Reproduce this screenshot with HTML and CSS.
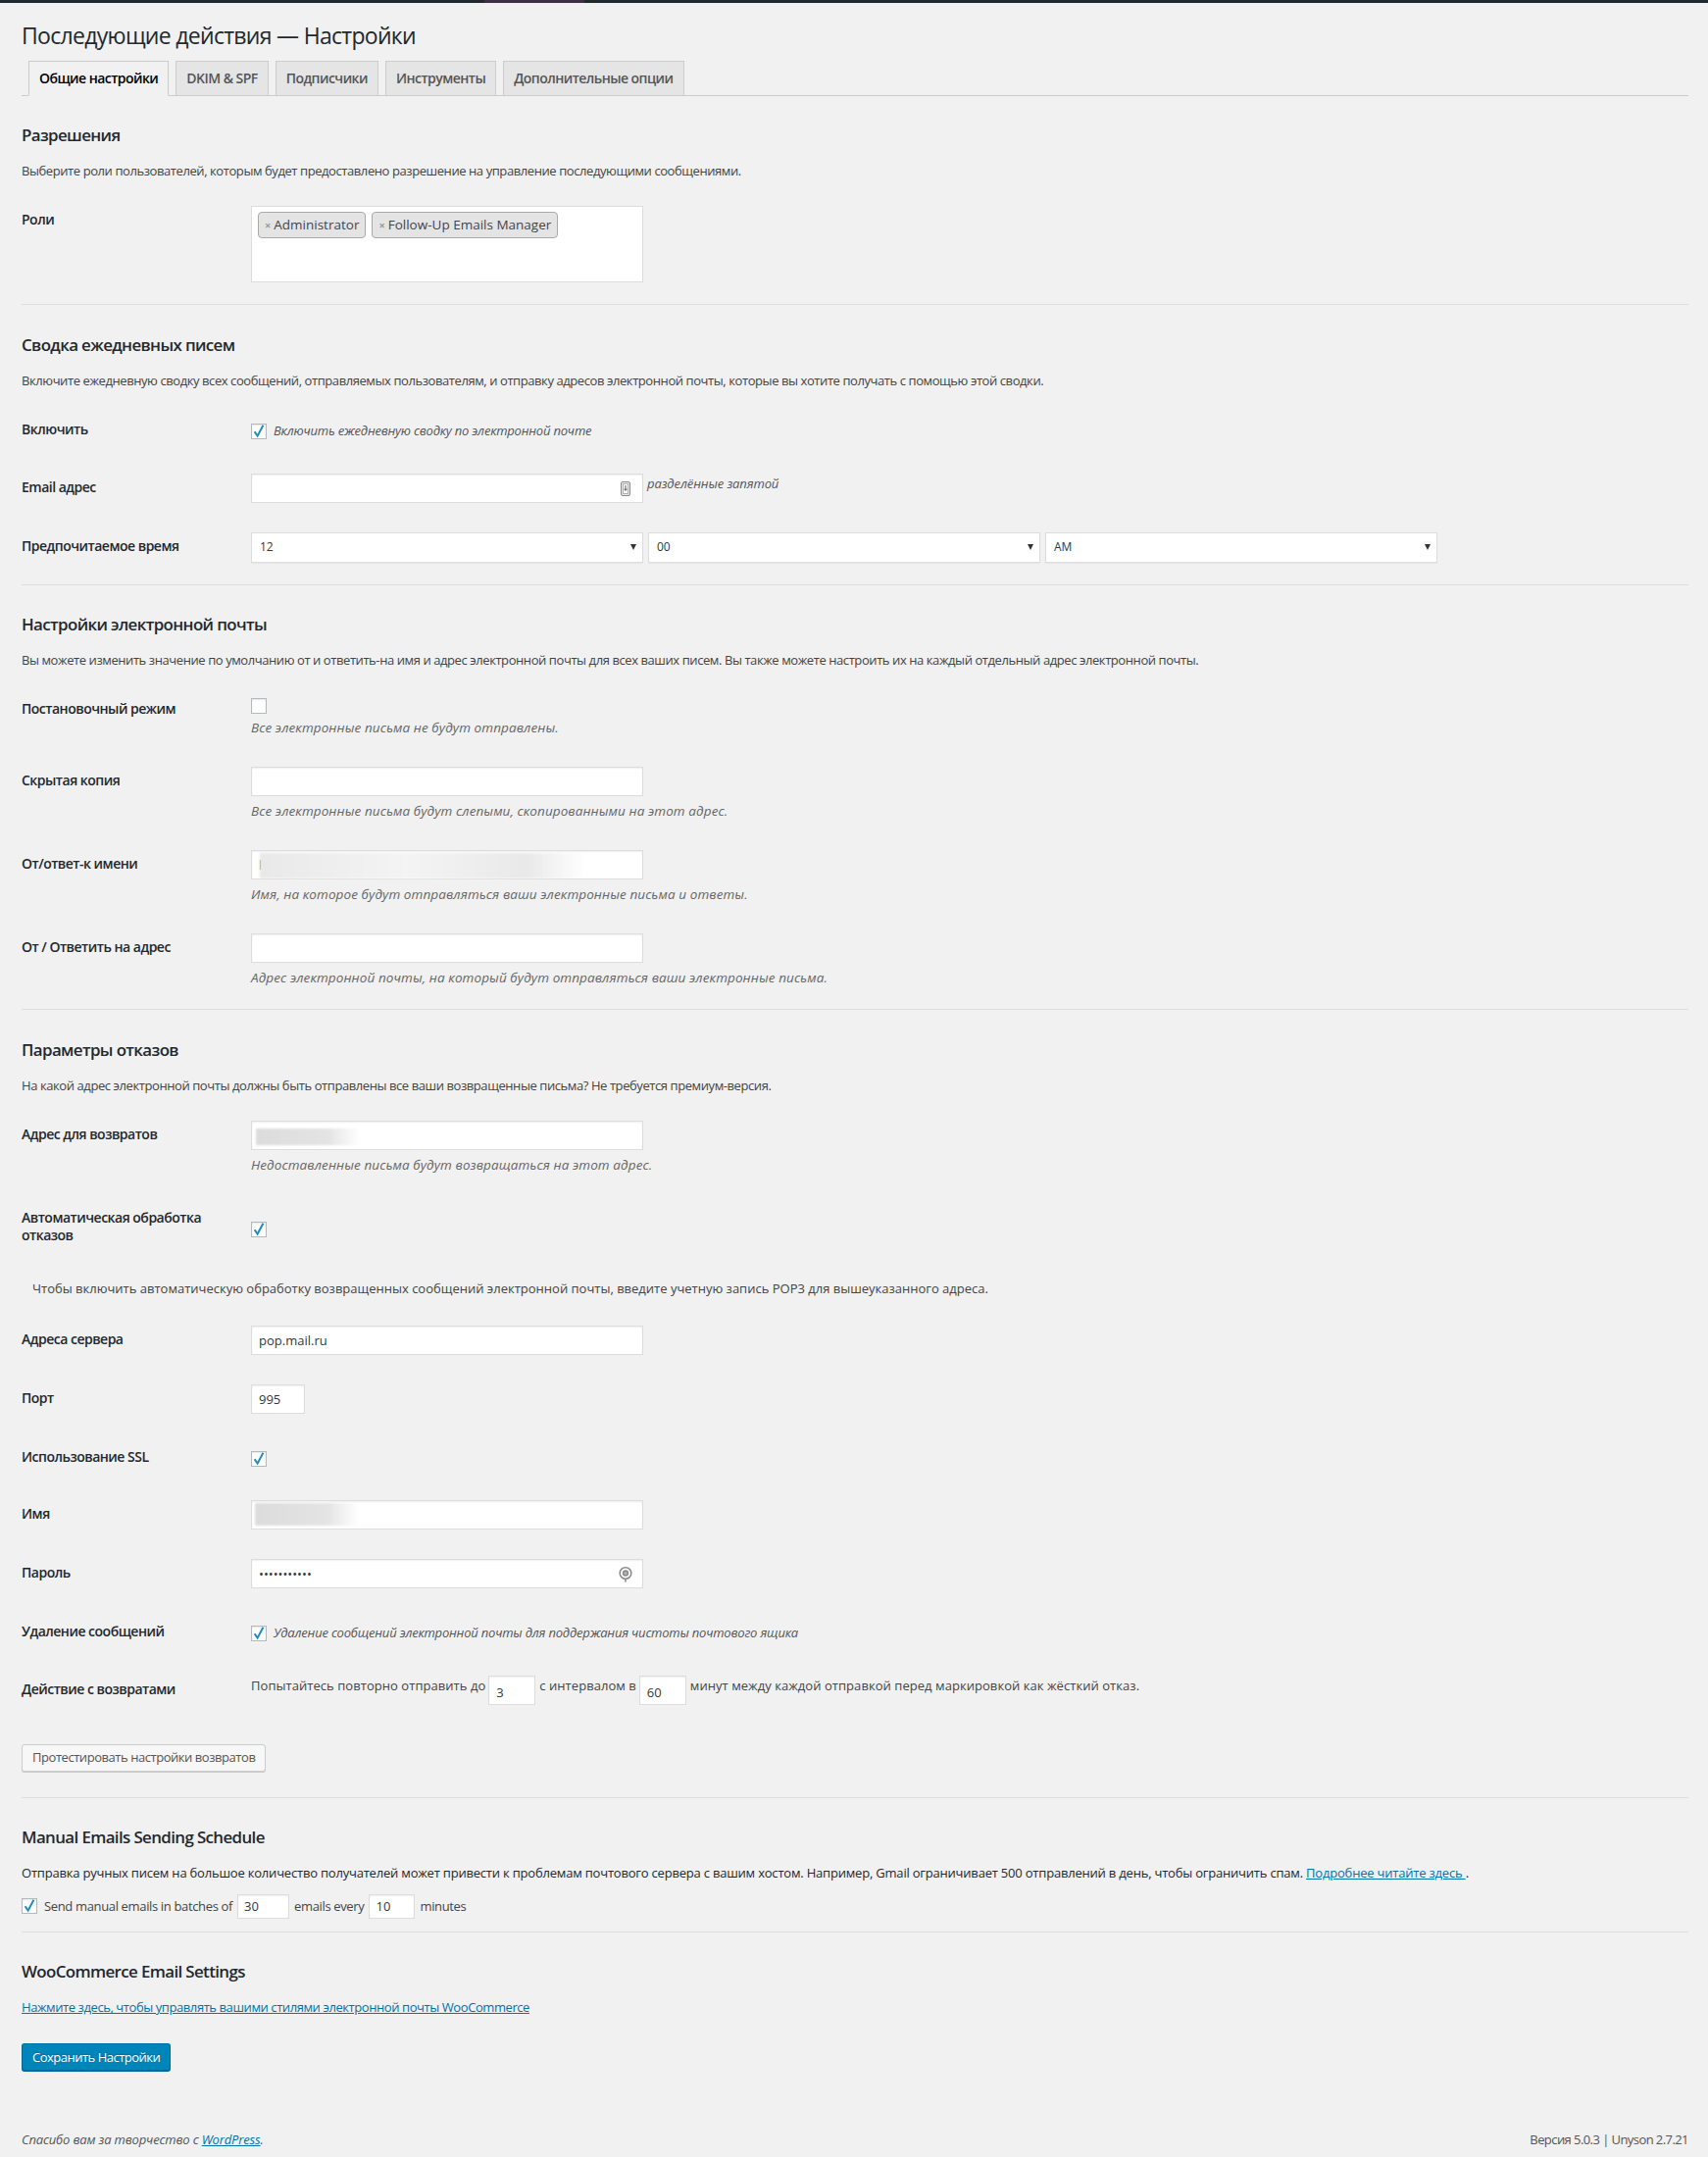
FILE: index.html
```html
<!DOCTYPE html>
<html lang="ru">

<head>
    <meta charset="utf-8">
    <title>Последующие действия — Настройки</title>
    <link rel="stylesheet" href="styles.css">
</head>

<body>
    <div class="adminbar"><span class="adminbar-hover"></span></div>

    <div class="wrap">
        <h1>Последующие действия — Настройки</h1>

        <nav class="tabs">
            <a class="tab active" href="#">Общие настройки</a>
            <a class="tab" href="#">DKIM &amp; SPF</a>
            <a class="tab" href="#">Подписчики</a>
            <a class="tab" href="#">Инструменты</a>
            <a class="tab" href="#">Дополнительные опции</a>
        </nav>

        <!-- разрешения -->
        <section class="section">
            <h2>Разрешения</h2>
            <p class="intro">Выберите роли пользователей, которым будет предоставлено разрешение на управление последующими сообщениями.</p>
            <div class="form">
                <div class="row">
                    <div class="th">Роли</div>
                    <div class="td">
                        <div class="roles">
                            <span class="chip"><span class="chip-x">×</span>Administrator</span>
                            <span class="chip"><span class="chip-x">×</span>Follow-Up Emails Manager</span>
                        </div>
                    </div>
                </div>
            </div>
        </section>

        <hr class="sep">

        <!-- сводка -->
        <section class="section">
            <h2>Сводка ежедневных писем</h2>
            <p class="intro">Включите ежедневную сводку всех сообщений, отправляемых пользователям, и отправку адресов электронной почты, которые вы хотите получать с помощью этой сводки.</p>
            <div class="form">
                <div class="row">
                    <div class="th">Включить</div>
                    <div class="td td-check">
                        <label class="check">
                            <span class="cb on"><svg viewBox="0 0 16 16"><path d="M3.6 8.2 L6.6 12.6 L12.4 1.8" /></svg></span>
                            <em>Включить ежедневную сводку по электронной почте</em>
                        </label>
                    </div>
                </div>
                <div class="row">
                    <div class="th">Email адрес</div>
                    <div class="td">
                        <div class="inline-top">
                            <div class="field">
                                <input class="text" type="text" value="">
                                <svg class="field-icon card" viewBox="0 0 10 15">
                                    <rect x="0.5" y="0.5" width="9" height="14" rx="1.5" />
                                    <rect x="2.5" y="2.5" width="5" height="10" class="inner" />
                                    <path d="M5 4 V9 M3.6 7.6 L5 9.2 L6.4 7.6" class="arrow" />
                                </svg>
                            </div>
                            <span class="desc-inline">разделённые запятой</span>
                        </div>
                    </div>
                </div>
                <div class="row">
                    <div class="th">Предпочитаемое время</div>
                    <div class="td">
                        <div class="selects">
                            <div class="select"><span>12</span><i class="caret"></i></div>
                            <div class="select"><span>00</span><i class="caret"></i></div>
                            <div class="select"><span>AM</span><i class="caret"></i></div>
                        </div>
                    </div>
                </div>
            </div>
        </section>

        <hr class="sep sep-wide">

        <!-- настройки почты -->
        <section class="section">
            <h2>Настройки электронной почты</h2>
            <p class="intro">Вы можете изменить значение по умолчанию от и ответить-на имя и адрес электронной почты для всех ваших писем. Вы также можете настроить их на каждый отдельный адрес электронной почты.</p>
            <div class="form">
                <div class="row">
                    <div class="th">Постановочный режим</div>
                    <div class="td">
                        <div class="check-line"><span class="cb"></span></div>
                        <p class="desc">Все электронные письма не будут отправлены.</p>
                    </div>
                </div>
                <div class="row">
                    <div class="th">Скрытая копия</div>
                    <div class="td">
                        <input class="text" type="text" value="">
                        <p class="desc">Все электронные письма будут слепыми, скопированными на этот адрес.</p>
                    </div>
                </div>
                <div class="row">
                    <div class="th">От/ответ-к имени</div>
                    <div class="td">
                        <div class="field">
                            <input class="text" type="text" value="l">
                            <span class="blur blur-long"></span>
                        </div>
                        <p class="desc">Имя, на которое будут отправляться ваши электронные письма и ответы.</p>
                    </div>
                </div>
                <div class="row">
                    <div class="th">От / Ответить на адрес</div>
                    <div class="td">
                        <input class="text" type="text" value="">
                        <p class="desc">Адрес электронной почты, на который будут отправляться ваши электронные письма.</p>
                    </div>
                </div>
            </div>
        </section>

        <hr class="sep">

        <!-- отказы -->
        <section class="section">
            <h2>Параметры отказов</h2>
            <p class="intro">На какой адрес электронной почты должны быть отправлены все ваши возвращенные письма? Не требуется премиум-версия.</p>
            <div class="form">
                <div class="row">
                    <div class="th">Адрес для возвратов</div>
                    <div class="td">
                        <div class="field">
                            <input class="text" type="text" value="">
                            <span class="blur"></span>
                        </div>
                        <p class="desc">Недоставленные письма будут возвращаться на этот адрес.</p>
                    </div>
                </div>
                <div class="row">
                    <div class="th">Автоматическая обработка отказов</div>
                    <div class="td td-middle">
                        <span class="cb on"><svg viewBox="0 0 16 16"><path d="M3.6 8.2 L6.6 12.6 L12.4 1.8" /></svg></span>
                    </div>
                </div>
                <div class="note">Чтобы включить автоматическую обработку возвращенных сообщений электронной почты, введите учетную запись POP3 для вышеуказанного адреса.</div>
                <div class="row">
                    <div class="th">Адреса сервера</div>
                    <div class="td"><input class="text" type="text" value="pop.mail.ru"></div>
                </div>
                <div class="row">
                    <div class="th">Порт</div>
                    <div class="td"><input class="text port" type="text" value="995"></div>
                </div>
                <div class="row">
                    <div class="th">Использование SSL</div>
                    <div class="td td-check">
                        <span class="cb on"><svg viewBox="0 0 16 16"><path d="M3.6 8.2 L6.6 12.6 L12.4 1.8" /></svg></span>
                    </div>
                </div>
                <div class="row">
                    <div class="th">Имя</div>
                    <div class="td">
                        <div class="field">
                            <input class="text" type="text" value="">
                            <span class="blur blur-name"></span>
                        </div>
                    </div>
                </div>
                <div class="row">
                    <div class="th">Пароль</div>
                    <div class="td">
                        <div class="field">
                            <input class="text" type="password" value="xxxxxxxxxxx">
                            <svg class="field-icon ring" viewBox="0 0 16 17">
                                <circle cx="8" cy="7.5" r="5.8" />
                                <circle cx="8" cy="7.5" r="2.4" class="dot" />
                                <path d="M8 13.3 V16.5" />
                            </svg>
                        </div>
                    </div>
                </div>
                <div class="row">
                    <div class="th">Удаление сообщений</div>
                    <div class="td td-check">
                        <label class="check">
                            <span class="cb on"><svg viewBox="0 0 16 16"><path d="M3.6 8.2 L6.6 12.6 L12.4 1.8" /></svg></span>
                            <em>Удаление сообщений электронной почты для поддержания чистоты почтового ящика</em>
                        </label>
                    </div>
                </div>
                <div class="row">
                    <div class="th">Действие с возвратами</div>
                    <div class="td">
                        <div class="inline-top retry">
                            <span>Попытайтесь повторно отправить до</span>
                            <input class="text num" type="text" value="3">
                            <span>с интервалом в</span>
                            <input class="text num" type="text" value="60">
                            <span>минут между каждой отправкой перед маркировкой как жёсткий отказ.</span>
                        </div>
                    </div>
                </div>
            </div>
            <button class="button" type="button">Протестировать настройки возвратов</button>
        </section>

        <hr class="sep">

        <!-- расписание -->
        <section class="section">
            <h2>Manual Emails Sending Schedule</h2>
            <p class="intro dark">Отправка ручных писем на большое количество получателей может привести к проблемам почтового сервера с вашим хостом. Например, Gmail ограничивает 500 отправлений в день, чтобы ограничить спам. <a href="#">Подробнее читайте здесь </a>.</p>
            <div class="batch">
                <span class="cb on"><svg viewBox="0 0 16 16"><path d="M3.6 8.2 L6.6 12.6 L12.4 1.8" /></svg></span>
                <span>Send manual emails in batches of</span>
                <input class="text small" type="text" value="30">
                <span>emails every</span>
                <input class="text small narrow" type="text" value="10">
                <span>minutes</span>
            </div>
        </section>

        <hr class="sep">

        <!-- woocommerce -->
        <section class="section">
            <h2>WooCommerce Email Settings</h2>
            <p class="intro"><a href="#">Нажмите здесь, чтобы управлять вашими стилями электронной почты WooCommerce</a></p>
            <button class="button-primary" type="button">Сохранить Настройки</button>
        </section>
    </div>

    <footer class="footer">
        <em>Спасибо вам за творчество с <a href="#">WordPress</a>.</em>
        <span class="version">Версия 5.0.3 | Unyson 2.7.21</span>
    </footer>
</body>

</html>
```

FILE: styles.css
```css
body {
    margin: 0;
    background: #f1f1f1;
    color: #444;
    font-family: 'Open Sans', 'Noto Sans', sans-serif;
    font-size: 13px;
    line-height: 20px;
}

a {
    color: #0073aa;
}

.adminbar {
    height: 3px;
    background: #23282d;
    position: relative;
}

.adminbar-hover {
    position: absolute;
    left: 494px;
    width: 102px;
    top: 0;
    bottom: 0;
    background: #3b3145;
}

.wrap {
    margin: 0 20px 0 22px;
}

h1 {
    margin: 18px 0 0;
    font-size: 23px;
    line-height: 30px;
    font-weight: 400;
    letter-spacing: -0.7px;
    color: #23282d;
}

/* вкладки */
.tabs {
    display: flex;
    margin-top: 11px;
    border-bottom: 1px solid #ccc;
}

.tab {
    margin: 0 0 -1px 7px;
    padding: 5px 10px;
    border: 1px solid #ccc;
    background: #e5e5e5;
    color: #555;
    font-size: 14px;
    line-height: 24px;
    font-weight: 600;
    letter-spacing: -0.54px;
    text-decoration: none;
}

.tab.active {
    background: #f1f1f1;
    border-bottom-color: #f1f1f1;
    color: #000;
}

/* секции */
.section h2 {
    margin: 29.4px 0 0;
    font-size: 16.9px;
    line-height: 22px;
    font-weight: 600;
    letter-spacing: -0.62px;
    color: #23282d;
}

.intro {
    margin: 15px 0 0;
    letter-spacing: -0.42px;
}

.intro.dark {
    color: #23282d;
    letter-spacing: -0.2px;
}

.sep {
    margin: 0;
    border: 0;
    border-top: 1px solid #ddd;
}

.sep-wide {
    margin-top: 1px;
}

.form {
    margin: 11px 0 7px;
}

.row {
    display: grid;
    grid-template-columns: 234px 1fr;
}

.th {
    padding: 20px 10px 20px 0;
    font-size: 14px;
    line-height: 18px;
    font-weight: 600;
    letter-spacing: -0.5px;
    color: #23282d;
}

.td {
    padding: 15px 0;
}

.td-check {
    display: flex;
    align-items: flex-start;
    padding: 20px 0 19px;
}

.td-middle {
    align-self: center;
    display: flex;
    padding: 6px 0 0;
}

.check {
    display: flex;
    align-items: flex-start;
}

.check em {
    margin-left: 7px;
    color: #555;
    letter-spacing: -0.2px;
}

.check-line {
    display: flex;
    height: 18px;
}

.check-line .cb {
    margin-top: 2.5px;
}

.note {
    padding: 15px 11px 13.5px;
}

/* поля */
.text {
    display: block;
    box-sizing: border-box;
    width: 400px;
    height: 30px;
    margin: 0;
    padding: 0 7px;
    border: 1px solid #ddd;
    background: #fff;
    box-shadow: inset 0 1px 2px rgba(0, 0, 0, .07);
    font-family: inherit;
    font-size: 13px;
    color: #32373c;
    outline: none;
}

.text.port {
    width: 55px;
}

.text.num {
    width: 48px;
    margin: 0 4px 0 3px;
    padding-top: 4px;
}

.text.small {
    width: 53px;
    height: 25px;
    margin: 0 5px;
    padding: 0 6px;
}

.text.small.narrow {
    width: 47px;
}

.field {
    position: relative;
    width: 400px;
}

.field-icon {
    position: absolute;
    fill: none;
}

.field-icon.card {
    right: 13px;
    top: 8px;
    width: 10px;
    height: 15px;
}

.card rect {
    fill: #e8e8e8;
    stroke: #8a8a8a;
    stroke-width: 1;
}

.card .inner {
    fill: #fff;
    stroke: #b0b0b0;
}

.card .arrow {
    stroke: #777;
    stroke-width: 1.2;
}

.field-icon.ring {
    right: 10px;
    top: 7px;
    width: 16px;
    height: 17px;
    stroke: #8c8c8c;
    stroke-width: 1.6;
}

.ring .dot {
    fill: #b5b5b5;
    stroke: #8c8c8c;
}

.blur {
    position: absolute;
    left: 5px;
    top: 8px;
    width: 106px;
    height: 17px;
    background: linear-gradient(90deg, #dcdcdc, #e4e4e4 70%, rgba(255, 255, 255, 0));
    filter: blur(1px);
}

.blur-long {
    left: 9px;
    top: 3px;
    width: 332px;
    height: 26px;
    background: linear-gradient(90deg, #e9e9e9, #f4f4f4 45%, #e9e9e9 82%, rgba(255, 255, 255, 0));
}

.blur-name {
    left: 4px;
    top: 3px;
    height: 23px;
}

.desc {
    margin: 5px 0 0;
    font-size: 13.5px;
    font-style: italic;
    letter-spacing: 0.1px;
    color: #666;
}

.inline-top {
    display: flex;
    align-items: flex-start;
}

.retry {
    letter-spacing: 0.05px;
}

.desc-inline {
    margin-left: 4px;
    font-style: italic;
    letter-spacing: -0.1px;
    color: #555;
}

.selects {
    display: flex;
    gap: 5px;
}

.select {
    display: flex;
    align-items: center;
    justify-content: space-between;
    box-sizing: border-box;
    width: 400px;
    height: 31px;
    padding: 0 6px 0 8px;
    border: 1px solid #ddd;
    background: #fff;
    box-shadow: 0 1px 1px rgba(0, 0, 0, .04);
    font-size: 12px;
    color: #32373c;
}

.caret {
    width: 0;
    height: 0;
    border-left: 3px solid transparent;
    border-right: 3px solid transparent;
    border-top: 6px solid #333;
}

/* чекбоксы */
.cb {
    display: inline-flex;
    flex-shrink: 0;
    box-sizing: border-box;
    width: 16px;
    height: 16px;
    margin-top: 3px;
    border: 1px solid #b4b9be;
    background: #fff;
    box-shadow: inset 0 1px 2px rgba(0, 0, 0, .1);
}

.cb svg {
    width: 16px;
    height: 16px;
    margin: -1px;
    fill: none;
    stroke: #1e8cbe;
    stroke-width: 2;
}

.td-middle .cb {
    margin-top: 0;
}

/* роли */
.roles {
    box-sizing: border-box;
    width: 400px;
    height: 78px;
    padding: 5px 6px;
    border: 1px solid #ddd;
    background: #fff;
    display: flex;
    align-items: flex-start;
    gap: 6px;
}

.chip {
    padding: 0 6px;
    border: 1px solid #aaa;
    border-radius: 4px;
    background: #e4e4e4;
    color: #444;
    font-size: 13.5px;
    line-height: 25px;
}

.chip-x {
    margin-right: 3px;
    color: #999;
    font-weight: 700;
    font-size: 11px;
}

/* кнопки */
.button {
    display: block;
    margin: 24.5px 0 26px;
    height: 28px;
    padding: 0 10px 1px;
    border: 1px solid #ccc;
    border-radius: 3px;
    background: #f7f7f7;
    box-shadow: 0 1px 0 #ccc;
    color: #555;
    font-family: inherit;
    font-size: 13px;
    letter-spacing: -0.45px;
}

.batch {
    display: flex;
    align-items: center;
    margin: 12px 0 13px;
    color: #444;
    letter-spacing: -0.35px;
}

.batch .cb {
    margin: 0 7px 0 0;
}

.button-primary {
    display: block;
    margin-top: 27px;
    height: 28px;
    padding: 0 10px 1px;
    border: 1px solid #0073aa;
    border-color: #0073aa #006799 #006799;
    border-radius: 3px;
    background: #0085ba;
    box-shadow: 0 1px 0 #006799;
    color: #fff;
    text-shadow: 0 -1px 1px #006799;
    font-family: inherit;
    font-size: 13px;
    letter-spacing: -0.5px;
}

.footer {
    display: flex;
    justify-content: space-between;
    margin: 60px 20px 0 22px;
    padding-bottom: 7px;
    color: #555;
}

.footer em {
    letter-spacing: -0.15px;
}

.version {
    letter-spacing: -0.57px;
}
```
